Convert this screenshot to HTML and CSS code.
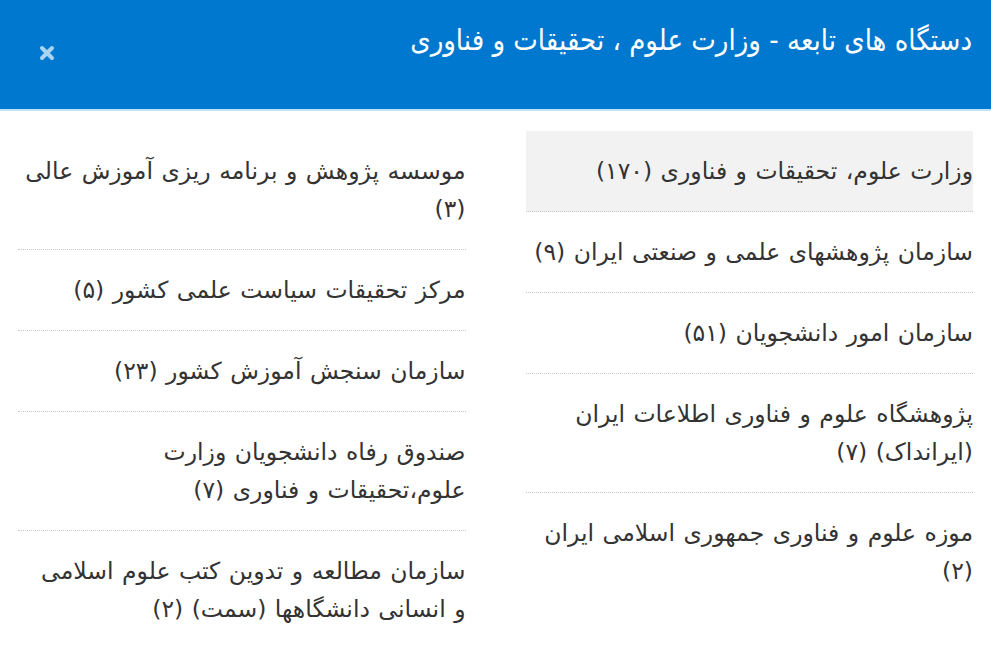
FILE: index.html
```html
<!DOCTYPE html>
<html lang="fa" dir="rtl">
<head>
<meta charset="utf-8">
<title>دستگاه های تابعه</title>
<link rel="stylesheet" href="styles.css">
</head>
<body>
<div class="modal">
  <header class="modal-header">
    <h1 class="modal-title">دستگاه های تابعه - وزارت علوم ، تحقیقات و فناوری</h1>
    <button class="close" type="button" aria-label="بستن">
      <svg width="16" height="16" viewBox="0 0 16 16"><path d="M3 3 L13 13 M13 3 L3 13" stroke="currentColor" stroke-width="4" stroke-linecap="round"/></svg>
    </button>
  </header>
  <div class="modal-body">
    <ul class="list">
      <li class="item active">وزارت علوم، تحقیقات و فناوری (۱۷۰)</li>
      <li class="item">سازمان پژوهشهای علمی و صنعتی ایران (۹)</li>
      <li class="item">سازمان امور دانشجویان (۵۱)</li>
      <li class="item">پژوهشگاه علوم و فناوری اطلاعات ایران (ایرانداک) (۷)</li>
      <li class="item">موزه علوم و فناوری جمهوری اسلامی ایران (۲)</li>
    </ul>
    <ul class="list">
      <li class="item">موسسه پژوهش و برنامه ریزی آموزش عالی (۳)</li>
      <li class="item">مرکز تحقیقات سیاست علمی کشور (۵)</li>
      <li class="item">سازمان سنجش آموزش کشور (۲۳)</li>
      <li class="item">صندوق رفاه دانشجویان وزارت علوم،تحقیقات و فناوری (۷)</li>
      <li class="item">سازمان مطالعه و تدوین کتب علوم اسلامی و&nbsp;انسانی دانشگاهها (سمت) (۲)</li>
    </ul>
  </div>
</div>
</body>
</html>
```

FILE: styles.css
```css
* { box-sizing: border-box; }
html, body { margin: 0; padding: 0; background: #fff; }
body { font-family: "DejaVu Sans", sans-serif; color: #333; }

.modal-header {
  background: #0078cf;
  border-bottom: 2px solid #bfe3f6;
  height: 111px;
  display: flex;
  justify-content: space-between;
  align-items: flex-start;
  padding: 0 19px 0 39px;
}
.modal-title {
  margin: 0;
  padding-top: 22px;
  font-family: "DejaVu Sans Condensed", "DejaVu Sans", sans-serif;
  font-weight: normal;
  font-size: 29px;
  line-height: 36px;
  color: #fff;
}
.close {
  margin-top: 45px;
  padding: 0;
  border: 0;
  background: none;
  color: #a9d4f1;
  width: 16px;
  height: 16px;
  display: flex;
}

.modal-body {
  display: grid;
  grid-template-columns: 1fr 1fr;
  column-gap: 60px;
  padding: 20px 18px 0;
}
.list { list-style: none; margin: 0; padding: 0; }
.item {
  font-size: 23.5px;
  line-height: 38px;
  word-spacing: 1px;
  padding: 21px 0;
  border-bottom: 1px dotted #c8c8c8;
}
.item:last-child { border-bottom: 0; }
.item.active { background: #f2f2f2; }
```
